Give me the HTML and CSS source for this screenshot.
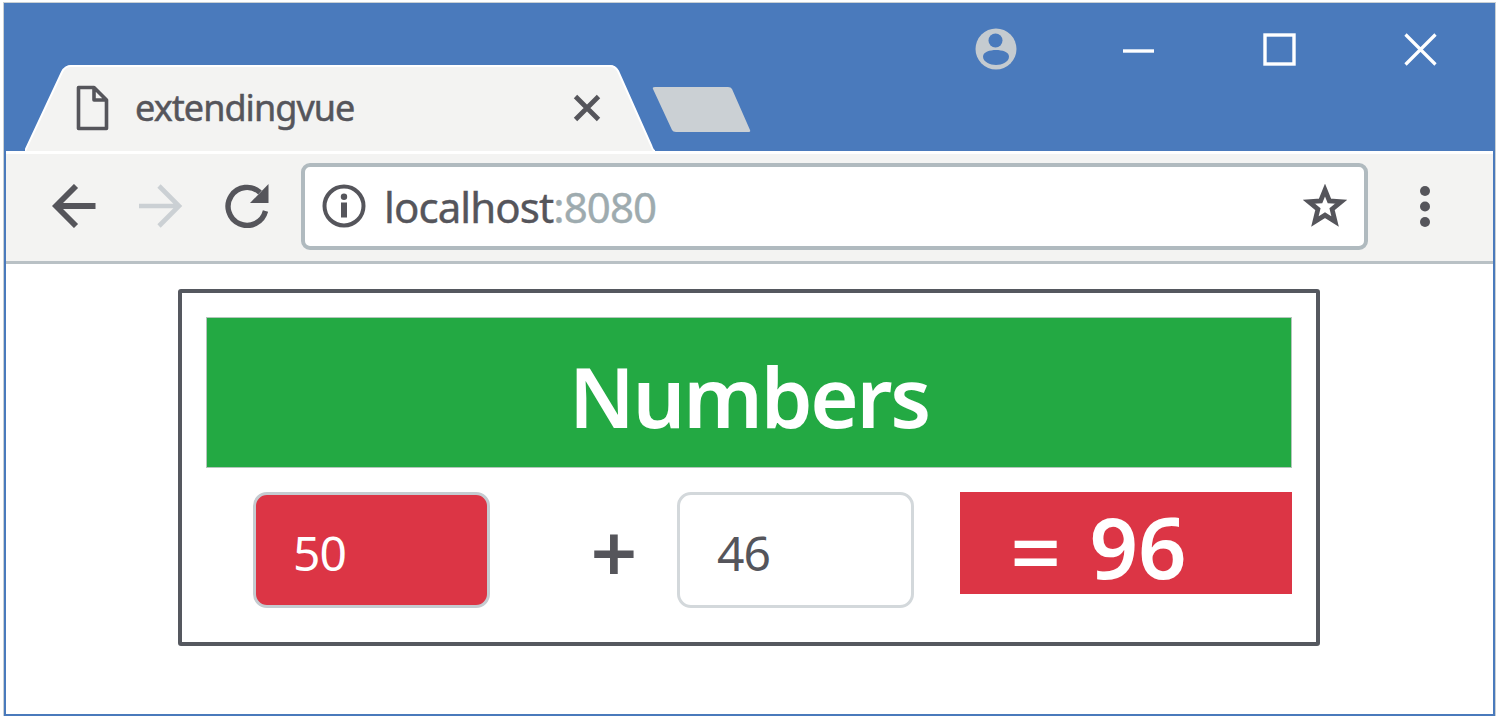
FILE: index.html
```html
<!DOCTYPE html>
<html lang="en">
<head>
<meta charset="utf-8">
<title>extendingvue</title>
<link rel="stylesheet" href="styles.css">
</head>
<body>
<div class="window">
  <header class="titlebar">
    <div class="tab">
      <svg class="tab-shape" width="630" height="86" viewBox="0 0 630 86"><path d="M0 86L37 7Q40 0 46 0H585Q590 0 593 6L626 80Q628 86 630 86Z" fill="#f3f3f2"/><path d="M0 86L37 7Q40 1 46 1H585Q590 1 593 6L626 80Q628 86 630 86" fill="none" stroke="#fff" stroke-width="2"/></svg>
      <svg class="tab-page" width="33" height="46" viewBox="0 0 33 46" fill="none" stroke="#55555b" stroke-width="3.6" stroke-linejoin="round"><path d="M2.5 2.5H18L30.500 15V43.500H2.500ZM18 2.500V15H30.500"/></svg>
      <span class="tab-title">extendingvue</span>
      <svg class="tab-close" width="28" height="28" viewBox="0 0 28 28" stroke="#55555b" stroke-width="4.800"><path d="M2.500 2.500L25.500 25.500M25.500 2.500L2.500 25.500"/></svg>
    </div>
    <svg class="new-tab" width="100" height="47" viewBox="0 0 100 47"><path d="M3 1H76Q79 1 80 3L98 44Q99 46 96 46H24Q21 46 20 44L1 3Q0 1 3 1Z" fill="#cbd0d4"/></svg>
    <div class="controls">
      <svg width="42" height="42" viewBox="0 0 42 42"><circle cx="21" cy="21" r="20.500" fill="#c5cbd0"/><circle cx="20.500" cy="12.500" r="7" fill="#4a7abc"/><path d="M8 28.500C8 24 15 22 21 22S34 24 34 28.500C34 34 27 37 21 37S8 34 8 28.500Z" fill="#4a7abc"/></svg>
      <svg width="33" height="33" viewBox="0 0 33 33"><path d="M1 18H32" stroke="#fff" stroke-width="3.400"/></svg>
      <svg width="33" height="33" viewBox="0 0 33 33"><rect x="2" y="2" width="29" height="29" fill="none" stroke="#fff" stroke-width="3.400"/></svg>
      <svg width="33" height="33" viewBox="0 0 33 33"><path d="M1.500 1.500L31.500 31.500M31.500 1.500L1.500 31.500" stroke="#fff" stroke-width="3.200"/></svg>
    </div>
  </header>
  <nav class="toolbar">
    <svg class="back" width="44" height="44" viewBox="0 0 44 44" fill="none" stroke="#55555b" stroke-width="5.800"><path d="M43.500 22H4M24 2L4 22L24 42"/></svg>
    <svg class="forward" width="44" height="44" viewBox="0 0 44 44" fill="none" stroke="#cbd0d4" stroke-width="4.600"><path d="M0 22H40M20 2L40 22L20 42"/></svg>
    <svg class="reload" width="44" height="44" viewBox="0 0 44 44"><path d="M40.500 27A19 19 0 1 1 35 8.500" fill="none" stroke="#55555b" stroke-width="5.400"/><path d="M43.500 0V19H25Z" fill="#55555b"/></svg>
    <div class="address">
      <svg width="44" height="44" viewBox="0 0 44 44"><circle cx="22" cy="22" r="19.500" fill="none" stroke="#55555b" stroke-width="4"/><circle cx="22" cy="12.800" r="3.200" fill="#55555b"/><rect x="19" y="18.500" width="6" height="15" fill="#55555b"/></svg>
      <span class="url">localhost<span class="port">:8080</span></span>
      <svg class="star" width="44" height="44" viewBox="0 0 44 44"><path d="M22 6L26.400 16.900L38.200 17.700L29.100 25.200L32.100 37.500L22 31.200L11.900 37.500L14.900 25.200L5.800 17.700L17.600 16.900Z" fill="none" stroke="#55555b" stroke-width="4.800"/></svg>
    </div>
    <svg class="menu" width="12" height="44" viewBox="0 0 12 44" fill="#55555b"><circle cx="6" cy="7" r="5"/><circle cx="6" cy="22.500" r="5"/><circle cx="6" cy="38" r="5"/></svg>
  </nav>
  <main class="page">
    <section class="panel">
      <h1 class="heading">Numbers</h1>
      <div class="row">
        <div class="field filled">50</div>
        <div class="plus">+</div>
        <div class="field">46</div>
        <div class="result"><span class="equals">=</span><span class="sum">96</span></div>
      </div>
    </section>
  </main>
</div>
</body>
</html>
```
FILE: styles.css
```css
* { box-sizing: border-box; }
body { margin: 0; background: #fff; overflow: hidden; font-family: "Noto Sans", "Open Sans", sans-serif; color: #55555b; }
svg { display: block; flex: none; }
.window { width: 1491px; height: 713px; margin: 3px 0 0 4px; border: 2px solid #4a7abc; border-top-width: 1px; box-shadow: 0 0 0 1px #c9d0d4; background: #fff; }
.titlebar { height: 147px; display: flex; align-items: flex-end; background: #4a7abc; padding-left: 19px; }
.tab { position: relative; width: 630px; height: 86px; display: flex; align-items: center; padding: 0 54px 0 51px; }
.tab-shape { position: absolute; left: 0; top: 0; }
.tab-page { position: relative; }
.tab-title { position: relative; margin: -1px 0 0 26px; flex: 1; font-size: 36px; line-height: 50px; white-space: nowrap; letter-spacing: -.95px; -webkit-text-stroke: .5px #55555b; }
.tab-close { position: relative; }
.new-tab { margin: 0 -1px 18px -3px; }
.controls { flex: 1; display: flex; align-items: center; justify-content: flex-end; gap: 108px; align-self: flex-start; padding: 24px 56px 0 0; }
.controls svg:first-child { margin-right: -3px; }
.toolbar { height: 113px; display: flex; align-items: center; background: #f3f3f2; border-top: 3px solid #fff; border-bottom: 3px solid #b9c1c5; padding: 0 0 3px 46px; }
.forward { margin-left: 43px; }
.reload { margin-left: 42px; }
.address { width: 1067px; height: 87px; margin-left: 32px; display: flex; align-items: center; padding: 0 17px; background: #fff; border: 4px solid #b0babf; border-radius: 9px; }
.url { flex: 1; margin: 2px 0 0 18px; font-size: 42px; line-height: 60px; letter-spacing: -.9px; -webkit-text-stroke: .4px; }
.port { color: #9eabaf; }
.menu { margin-left: 51px; }
.page { padding: 25px 0 0 172px; }
.panel { width: 1142px; height: 357px; padding: 24px; border: 4px solid #55585f; border-radius: 3px; }
.heading { margin: 0; height: 151px; background: #23a943; color: #fff; font-size: 83px; line-height: 155px; font-weight: 600; text-align: center; letter-spacing: -2.3px; border: 1px solid #b4c6bb; }
.row { display: flex; align-items: flex-start; margin-top: 24px; padding-left: 47px; }
.field { width: 237px; height: 116px; padding-left: 37px; border: 3px solid #d3d8db; border-radius: 14px; font-size: 48px; line-height: 115px; letter-spacing: -1px; }
.filled { background: #dc3545; color: #fff; border-color: #c5cbd0; }
.plus { width: 187px; padding-left: 61px; text-align: center; font-size: 82px; line-height: 118px; font-weight: 600; }
.result { flex: 1; height: 102px; margin-left: 46px; padding-left: 50px; display: flex; background: #dc3545; color: #fff; font-size: 85px; line-height: 108px; font-weight: 600; }
.equals { font-size: 90px; line-height: 117px; font-weight: 500; }
.sum { margin-left: 28px; letter-spacing: 0; }
```
